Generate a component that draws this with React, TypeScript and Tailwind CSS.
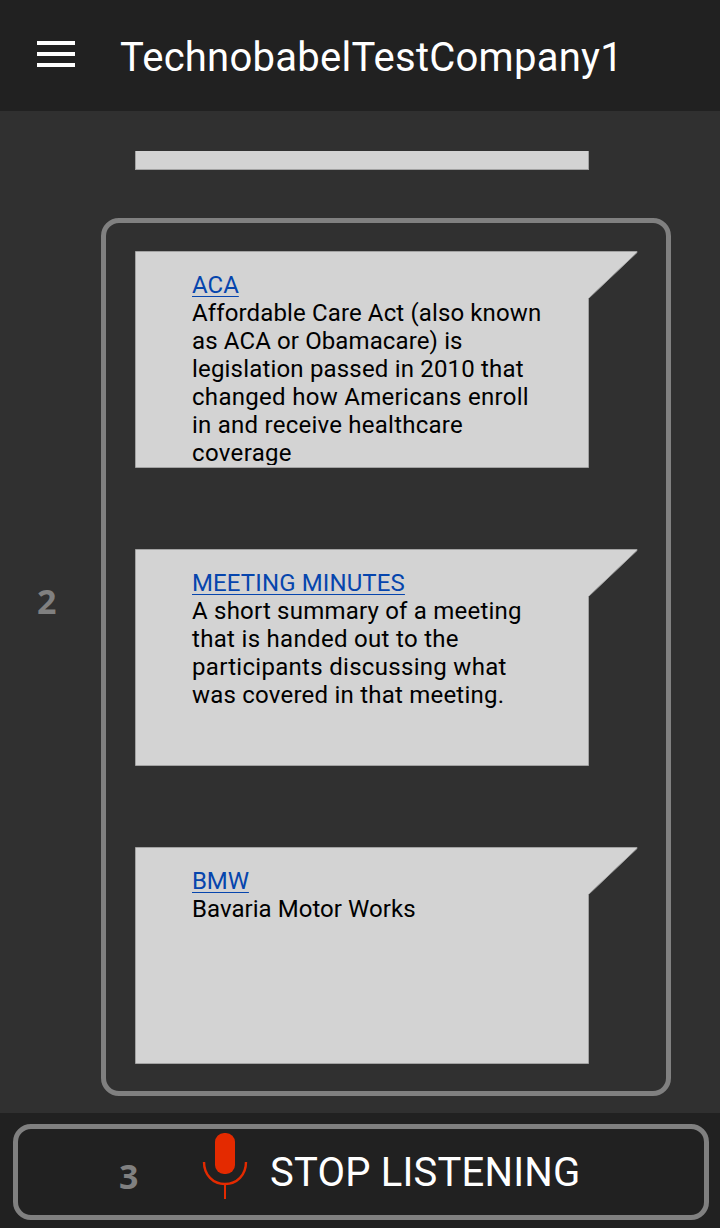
type Line = { text: string; tracking: string };
type Entry = { term: string; termTracking: string; lines: Line[] };

const entries: Entry[] = [
  {
    term: 'ACA',
    termTracking: 'tracking-normal',
    lines: [
      { text: 'Affordable Care Act (also known', tracking: 'tracking-[0.13px]' },
      { text: 'as ACA or Obamacare) is', tracking: 'tracking-[0.12px]' },
      { text: 'legislation passed in 2010 that', tracking: 'tracking-[0.18px]' },
      { text: 'changed how Americans enroll', tracking: 'tracking-[0.3px]' },
      { text: 'in and receive healthcare', tracking: 'tracking-[0.24px]' },
      { text: 'coverage', tracking: 'tracking-[0.34px]' },
    ],
  },
  {
    term: 'MEETING MINUTES',
    termTracking: 'tracking-[0.12px]',
    lines: [
      { text: 'A short summary of a meeting', tracking: 'tracking-[0.21px]' },
      { text: 'that is handed out to the', tracking: 'tracking-[0.31px]' },
      { text: 'participants discussing what', tracking: 'tracking-[0.3px]' },
      { text: 'was covered in that meeting.', tracking: 'tracking-[0.22px]' },
    ],
  },
  {
    term: 'BMW',
    termTracking: 'tracking-[-0.1px]',
    lines: [{ text: 'Bavaria Motor Works', tracking: 'tracking-[0.05px]' }],
  },
];

function Card({ term, termTracking, lines }: Entry) {
  return (
    <article className="relative h-[217px] w-[503px]">
      <svg className="absolute inset-0" width="503" height="217" viewBox="0 0 503 217" aria-hidden="true">
        <path d="M.5 .5H502V1.5L453.5 47.5V216.5H.5Z" fill="#d3d3d3" stroke="#a2a2a2" strokeWidth="1" />
      </svg>
      <div className="relative h-[214px] overflow-hidden pl-[57px] pt-[20px] text-[24px] leading-[28px] whitespace-nowrap text-black">
        <a className={`block w-fit text-[#0645ad] underline decoration-1 underline-offset-[3px] ${termTracking}`}>{term}</a>
        {lines.map(({ text, tracking }) => (
          <p key={text} className={tracking}>{text}</p>
        ))}
      </div>
    </article>
  );
}

function Microphone() {
  return (
    <svg width="46" height="68" viewBox="0 0 46 68" fill="none" aria-hidden="true">
      <rect x="13" y="1" width="20" height="41" rx="9" fill="#e42a00" />
      <path d="M2 30C2 43 11 52 23 52S44 43 44 30" stroke="#e42a00" strokeWidth="2.4" />
      <path d="M23 52V67" stroke="#e42a00" strokeWidth="2" />
    </svg>
  );
}

export default function App() {
  return (
    <div className="flex h-[1228px] w-[720px] flex-col overflow-hidden bg-[#303030] font-['Roboto',sans-serif]">
      <header className="flex h-[111px] shrink-0 items-start bg-[#212121] pl-[37px] text-white">
        <button className="mt-[41px] flex w-[38px] flex-col gap-[7px]" aria-label="Menu">
          <span className="h-1 w-full bg-white" />
          <span className="h-1 w-full bg-white" />
          <span className="h-1 w-full bg-white" />
        </button>
        <h1 className="ml-[45px] mt-[34px] text-[40px] leading-[48px] tracking-[0.25px] whitespace-nowrap">TechnobabelTestCompany1</h1>
      </header>

      <main className="flex h-[1002px] shrink-0">
        <div className="w-[101px] pl-[37px] pt-[468px] font-['Open_Sans',sans-serif] text-[34px] leading-[44px] font-bold text-[#808080]">2</div>
        <div className="pt-[40px]">
          <div className="ml-[34px] h-[19px] w-[454px] border border-t-0 border-[#a2a2a2] bg-[#d3d3d3]" />
          <section className="mt-[48px] flex h-[878px] w-[570px] flex-col gap-[81px] rounded-[18px] border-[5px] border-[#808080] pl-[29px] pt-[28px]">
            {entries.map((entry) => (
              <Card key={entry.term} {...entry} />
            ))}
          </section>
        </div>
      </main>

      <footer className="h-[115px] shrink-0 bg-[#212121] pl-[13px] pt-[11px]">
        <div className="flex h-[96px] w-[696px] items-start rounded-[18px] border-[5px] border-[#808080]">
          <span className="ml-[101px] mt-[25px] w-[83px] font-['Open_Sans',sans-serif] text-[34px] leading-[44px] font-bold text-[#808080]">3</span>
          <button className="mt-[3px] flex items-start text-white">
            <Microphone />
            <span className="ml-[22px] mt-[17px] text-[40px] leading-[48px] tracking-[0.2px] whitespace-nowrap">STOP LISTENING</span>
          </button>
        </div>
      </footer>
    </div>
  );
}
